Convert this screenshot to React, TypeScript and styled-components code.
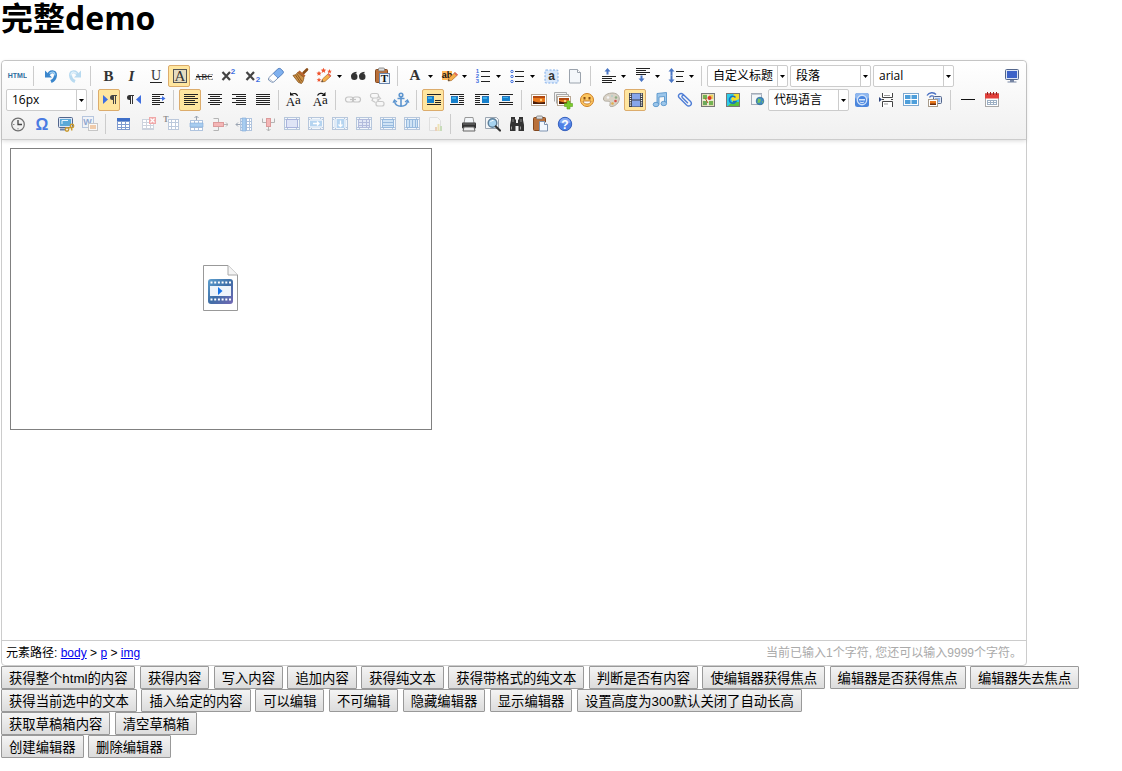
import React from 'react';
import styled, { createGlobalStyle, css } from 'styled-components';

const GlobalStyle = createGlobalStyle`
  body {
    margin: 0;
    padding: 0 1px;
    background: #fff;
    color: #000;
    font-family: 'Liberation Sans', 'Noto Sans CJK SC', sans-serif;
    font-size: 16px;
  }
`;

const Title = styled.h1`
  margin: 0 0 24px;
  font: bold 32px/36px 'Open Sans', 'Noto Sans CJK SC', sans-serif;
`;

const Editor = styled.section`
  box-sizing: border-box;
  max-width: 1026px;
  border: 1px solid #ccc;
  border-radius: 4px;
  background: #fff;
`;

const Toolbar = styled.div`
  display: flex;
  flex-direction: column;
  padding: 3px 2px 3px 3px;
  border-bottom: 1px solid #ccc;
  border-radius: 4px 4px 0 0;
  background: linear-gradient(#fff, #f0f0f0);
  box-shadow: 0 1px 4px rgba(0, 0, 0, 0.15);
`;

const ToolRow = styled.div`
  display: flex;
  flex-wrap: wrap;
`;

const ToolButton = styled.button<{ $active?: boolean; $pushRight?: boolean }>`
  display: flex;
  margin: 1px;
  padding: 0;
  border: 1px solid transparent;
  border-radius: 2px;
  background: transparent;
  ${p => p.$active && css`
    border-color: #dcac6c;
    background: #ffe69f;
  `}
  ${p => p.$pushRight && css`margin-left: auto;`}
`;

const IconSvg = styled.svg<{ $w?: number }>`
  display: block;
  width: ${p => p.$w ?? 20}px;
  height: 20px;
`;

const Separator = styled.span`
  width: 1px;
  height: 20px;
  margin: 2px 4px;
  background: #ccc;
`;

const Combo = styled.label`
  display: grid;
  grid-template-columns: 70px 9px;
  box-sizing: border-box;
  height: 22px;
  margin: 1px;
  border: 1px solid #ccc;
  border-radius: 2px;
  background: #fff;
`;

const ComboSelect = styled.select`
  grid-area: 1 / 1 / 2 / 3;
  appearance: none;
  min-width: 0;
  padding: 0 10px 0 5px;
  border: 0;
  background: transparent;
  color: #000;
  font: 12px/20px 'Open Sans', 'Noto Sans CJK SC', sans-serif;
`;

const ComboArrow = styled.svg`
  grid-area: 1 / 2;
  width: 9px;
  height: 20px;
  box-shadow: -1px 0 #ccc;
  pointer-events: none;
`;

const Content = styled.div`
  box-sizing: border-box;
  min-height: 500px;
  padding: 8px;
`;

const VideoHolder = styled.div`
  display: flex;
  align-items: center;
  justify-content: center;
  max-width: 420px;
  height: 280px;
  border: 1px solid #808080;
`;

const StatusBar = styled.footer`
  display: flex;
  justify-content: space-between;
  padding: 0 4px;
  border-top: 1px solid #ccc;
  font-size: 12px;
  line-height: 24px;
`;

const PathLink = styled.a`
  color: #00e;
  text-decoration: underline;
`;

const WordCount = styled.span`
  color: #aaa;
`;

const ActionRow = styled.div`
  line-height: 23px;
`;

const ActionButton = styled.button`
  box-sizing: border-box;
  height: 23px;
  padding: 0 7px;
  border: 1px solid #999;
  border-radius: 1px;
  background: linear-gradient(#f4f4f4, #dcdcdc);
  color: #000;
  font-family: 'Liberation Sans', 'Noto Sans CJK SC', sans-serif;
  vertical-align: top;
`;

const SANS = 'Liberation Sans, sans-serif';
const SERIF = 'Liberation Serif, serif';
const BLUE = '#3f6fe0';

const txt = (s: string, x: number, y: number, size: number, fill = '#333', family = SERIF, weight = 'bold', style = 'normal') => (
  <text x={x} y={y} fontSize={size} fill={fill} fontFamily={family} fontWeight={weight} fontStyle={style} textAnchor="middle">{s}</text>
);

/* horizontal one-pixel rules, each given as [x, y, width] */
const rules = (list: number[][], fill = '#222') => (
  <g fill={fill} shapeRendering="crispEdges">
    {list.map(([x, y, w], i) => <rect key={i} x={x} y={y} width={w} height={1} />)}
  </g>
);

const alignLines = (offset: (w: number) => number, short: number) =>
  rules([4, 6, 8, 10, 12, 14].map((y, i) => {
    const w = i % 2 ? short : 14;
    return [offset(w), y, w];
  }));

const pencil = (x: number, y: number) => (
  <g transform={`translate(${x} ${y})`}>
    <path d="M0 9 1 6 7 0.5 9.5 3 3.5 8.5z" fill="#f6b04a" stroke="#a86a2a" strokeWidth=".7" />
    <path d="M6 1.5 7.3.3 9.8 2.8 8.5 4z" fill="#e46a5a" />
    <path d="M0 9 .6 7 2 8.4z" fill="#444" />
  </g>
);

const star = (x: number, y: number, r: number) => (
  <path transform={`translate(${x} ${y}) scale(${r})`} fill="#f0532d" d="M0-1 .3-.35 1-.3 .45.15 .62.85 0 .45-.62.85-.45.15-1-.3-.3-.35z" />
);

const bluePic = (x: number, y: number, w: number, h: number) => (
  <g shapeRendering="crispEdges">
    <rect x={x} y={y} width={w} height={h} fill="#1680cc" />
    <rect x={x} y={y} width={w} height={1} fill="#2a6fb0" />
    <rect x={x + 1} y={y + 1} width={w - 3} height={Math.floor(h / 2) - 1} fill="#3cb2ee" />
  </g>
);

const sunset = (x: number, y: number, w: number, h: number) => (
  <g>
    <rect x={x + 0.5} y={y + 0.5} width={w - 1} height={h - 1} fill="#fff" stroke="#b9a894" />
    <rect x={x + 2} y={y + 2} width={w - 4} height={h - 4} fill="#e8781c" />
    <rect x={x + 2} y={y + 2} width={w - 4} height={2} fill="#b3480e" />
    <circle cx={x + w - 6} cy={y + h / 2} r="1.2" fill="#ffd27a" />
    <path d={`M${x + 2} ${y + h - 5}l3 1 3 0.5 ${w - 10} -0.5v2H${x + 2}z`} fill="#4a1c08" />
  </g>
);

const cells = (x: number, y: number, w: number, h: number, xs: number[], ys: number[], stroke = '#a9bfdc', fill = '#fff') => (
  <g shapeRendering="crispEdges" stroke={stroke} fill="none">
    <rect x={x + 0.5} y={y + 0.5} width={w - 1} height={h - 1} fill={fill} />
    {xs.map(v => <path key={`x${v}`} d={`M${v + 0.5} ${y}v${h}`} />)}
    {ys.map(v => <path key={`y${v}`} d={`M${x} ${v + 0.5}h${w}`} />)}
  </g>
);

/* faded outer table whose middle block shows the merge or split */
const mergeFrame = (inner: React.ReactNode) => (
  <g>
    {cells(4, 3, 16, 13, [7, 16], [5, 13], '#b7c7dc', '#f3f7fb')}
    <rect x="6" y="5" width="12" height="9" fill="#dfeaf6" />
    {inner}
  </g>
);

const clipboard = (
  <g>
    <rect x="4.500" y="3.500" width="12" height="13" rx="1" fill="#b9703a" stroke="#83481e" />
    <rect x="7.500" y="2" width="6" height="3" rx="1" fill="#ddd" stroke="#777" strokeWidth=".8" />
  </g>
);

const undoShape = (fill: string, light: string) => (
  <g>
    <path d="M8.500 9C9.500 4.500 15.800 4.500 15.500 9.300C15.300 12 14 14.200 11 15.500" fill="none" stroke={fill} strokeWidth="3" />
    <path d="M5 4.500V11.500H12z" fill={fill} />
    <path d="M9.500 7.500C11.500 5.200 15 5.500 15 9.500" fill="none" stroke={light} strokeWidth="1.200" />
  </g>
);

const arrowUp = (x: number, y: number, h: number) => (
  <path d={`M${x} ${y}l-3 3.500h2v${h - 3}h2v-${h - 3}h2z`} fill="#4a76c4" />
);
const arrowDown = (x: number, y: number, h: number) => (
  <path d={`M${x} ${y + h}l-3-3.500h2v-${h - 3}h2v${h - 3}h2z`} fill="#4a76c4" />
);

const monitor = (x: number, y: number, w: number, h: number, fill: string) => (
  <g>
    <rect x={x + 0.5} y={y + 0.5} width={w - 1} height={h - 1} rx="1" fill="#dde6f5" stroke="#53668c" />
    <rect x={x + 2} y={y + 2} width={w - 4} height={h - 4} fill={fill} />
  </g>
);

const ICONS: Record<string, React.ReactNode> = {
  source: txt('HTML', 10.5, 12, 7, '#2f6f9f', SANS),
  undo: undoShape('#3a86cc', '#a5d4f5'),
  redo: <g transform="matrix(-1 0 0 1 22 0)">{undoShape('#b8daf0', '#e2f2fc')}</g>,
  bold: txt('B', 11.5, 15, 15),
  italic: txt('I', 10.5, 15, 15, '#333', SERIF, 'bold', 'italic'),
  underline: <g>{txt('U', 11, 14, 14, '#333', SERIF, 'normal')}{rules([[5, 16, 12]])}</g>,
  fontborder: <g><rect x="4.500" y="3.500" width="13" height="13" fill="#e6dcc0" stroke="#555" />{txt('A', 11, 15, 15, '#333', SERIF, 'normal')}</g>,
  strike: <g>{txt('ABC', 11, 14, 9, '#222', SERIF, 'normal')}{rules([[3, 10, 16]])}</g>,
  sup: <g><path d="M5.500 6 13 14M13 6 5.500 14" stroke="#444" strokeWidth="2.200" />{txt('2', 16, 8, 8, BLUE, SANS)}</g>,
  sub: <g><path d="M5.500 6 13 14M13 6 5.500 14" stroke="#444" strokeWidth="2.200" />{txt('2', 17, 16, 8, BLUE, SANS)}</g>,
  eraser: (
    <g>
      <path d="M3.500 12 13 2.800Q14.200 2 15.500 2.800L18 5.200Q18.800 6.500 17.800 7.500L9 15.800Q7.800 16.800 6.600 16L3.500 14z" fill="#fff" stroke="#7d95b8" />
      <path d="M8.300 7.500 13 2.800Q14.200 2 15.500 2.800L18 5.200Q18.800 6.500 17.800 7.500L13 12z" fill="#7fb0ee" stroke="#5683c4" strokeWidth=".8" />
      <path d="M3.500 12.200 8 15.900" stroke="#b6bfcc" />
    </g>
  ),
  broom: (
    <g>
      <path d="M18 3.500 14.500 7" stroke="#8a4d17" strokeWidth="2.600" strokeLinecap="round" />
      <path d="M10.500 4.500 16.500 9.500 15 11.500 8.500 6.500z" fill="#b8642c" />
      <path d="M8.500 6.500 15 11.500C14.500 14 14 16 12.500 17.500L9.500 16.500 4 9.500C6 9 7.500 8.500 8.500 6.500z" fill="#cf9347" stroke="#83501b" strokeWidth=".8" />
      <path d="M6.500 9 11.500 16.500M8.200 8.200 13 15.500" stroke="#7b4a18" strokeWidth=".8" />
    </g>
  ),
  wand: <g>{star(10.5, 4.5, 2.8)}{star(6, 7.500, 2.600)}{star(16.500, 5.500, 2.400)}{star(6, 14, 2.400)}{pencil(8.500, 7)}</g>,
  quote: (
    <g fill="#333">
      <circle cx="7.300" cy="10.800" r="3.200" /><path d="M4.100 11C4 8 6 6 9.500 5.800V7.500C7.500 7.800 6.800 8.800 6.800 10z" />
      <circle cx="15.300" cy="10.800" r="3.200" /><path d="M12.100 11C12 8 14 6 17.500 5.800V7.500C15.500 7.800 14.800 8.800 14.800 10z" />
    </g>
  ),
  pasteplain: <g>{clipboard}<rect x="8.500" y="7.500" width="10" height="10" fill="#eef4fb" stroke="#6a86ad" />{txt('T', 13.5, 16, 11, '#111')}</g>,
  forecolor: txt('A', 11, 14, 15, '#333', SERIF, 'bold'),
  backcolor: <g><rect x="4" y="5" width="10" height="9" fill="#ffb857" />{txt('ab', 9, 12, 9, '#111', SANS)}<g transform="translate(2 1)">{pencil(8, 5)}</g></g>,
  ol: <g>{txt('1', 5.5, 7, 6, BLUE, SANS)}{txt('2', 5.5, 12, 6, BLUE, SANS)}{txt('3', 5.5, 17, 6, BLUE, SANS)}{rules([[9, 5, 9], [9, 10, 9], [9, 15, 9]])}</g>,
  ul: <g><g fill="none" stroke={BLUE}><circle cx="6" cy="5.500" r="1.200" /><circle cx="6" cy="10.500" r="1.200" /><circle cx="6" cy="15.500" r="1.200" /></g>{rules([[9, 5, 9], [9, 10, 9], [9, 15, 9]])}</g>,
  selectall: <g><rect x="5" y="4" width="13" height="13" rx="1" fill="#d9e8fb" stroke="#7fadea" strokeDasharray="2 1.500" />{txt('a', 11.5, 14, 12, '#333', SANS)}</g>,
  cleardoc: <g><path d="M5.500 3.500h8l3 3v10.500h-11z" fill="#f4f7fa" stroke="#9ba3ad" /><path d="M13.500 3.500v3h3" fill="#fff" stroke="#9ba3ad" /></g>,
  rowtop: <g>{arrowUp(10.5, 2, 6)}{rules([[5, 10, 14], [5, 12, 10], [5, 14, 14], [5, 16, 10]])}</g>,
  rowbottom: <g>{rules([[5, 2, 14], [5, 4, 10], [5, 6, 14], [5, 8, 10]])}{arrowDown(10.5, 10, 6)}</g>,
  lineheight: <g>{arrowUp(6.5, 2, 7)}{arrowDown(6.5, 10, 7)}{rules([[11, 5, 8], [11, 10, 7], [11, 15, 8]])}</g>,
  fullscreen: <g>{monitor(3, 3, 14, 11, '#3c62c8')}<path d="M8 14h4v1.500H8zM5.500 15.500h9v1h-9z" fill="#7786a3" /></g>,
  ltr: <g><path d="M4 5v9l5-4.500z" fill={BLUE} /><path d="M18 5.500H13.500M14.500 5v9M16.500 5v9" fill="none" stroke="#444" /><path d="M14.500 5H13.500a2.500 2.500 0 0 0 0 5h1z" fill="#444" /></g>,
  rtl: <g><path d="M18 5v9l-5-4.500z" fill={BLUE} /><path d="M11 5.500H7M7.500 5v9M9.500 5v9" fill="none" stroke="#333" /><path d="M7.500 5H6.500a2.500 2.500 0 0 0 0 5h1z" fill="#333" /></g>,
  indent: <g>{rules([[5, 4, 12], [5, 6, 8], [5, 8, 8], [5, 10, 8], [5, 12, 12], [5, 14, 8]])}<path d="M13 8h2V6l3.500 2.500L15 11V9h-2z" fill={BLUE} /></g>,
  left: alignLines(() => 4, 11),
  center: alignLines(w => 4 + Math.floor((14 - w) / 2), 10),
  right: alignLines(w => 18 - w, 10),
  justify: alignLines(() => 4, 14),
  upper: <g>{txt('A', 5.5, 16, 13, '#111', SERIF, 'normal')}{txt('a', 13, 14, 13, '#111', SERIF, 'normal')}<path d="M12.500 6C12 3.500 9 3 7 4" fill="none" stroke="#111" strokeWidth="1.200" /><path d="M5 5.500V2l4 3.500z" fill="#111" /></g>,
  lower: <g>{txt('A', 8.5, 16, 13, '#111', SERIF, 'normal')}{txt('a', 16, 14, 13, '#111', SERIF, 'normal')}<path d="M8.500 5.500C10 3 13 3 14.500 4" fill="none" stroke="#111" strokeWidth="1.200" /><path d="M16.500 6V2l-4 4z" fill="#111" /></g>,
  link: <g fill="none" stroke="#c4c4c4" strokeWidth="1.200"><rect x="3.500" y="7" width="8" height="5" rx="2.500" /><rect x="10.500" y="7" width="8" height="5" rx="2.500" /><path d="M8 9.500h6" /></g>,
  unlink: <g fill="none" stroke="#c8c8c8" strokeWidth="1.200"><rect x="4.500" y="3.500" width="8" height="4.500" rx="2" /><rect x="10" y="11.500" width="8" height="4.500" rx="2" /><path d="M12.500 6l2 2.500-3 1.500 1.500 1.500M7 8l-1 2.500 3.500 2" /></g>,
  anchor: <g fill="none" stroke="#5d95cf" strokeWidth="1.600"><circle cx="11" cy="5" r="1.800" /><path d="M11 7v9M7.500 8.500h7M4.500 11C5 14.500 8 16.200 11 16.200s6-1.700 6.500-5.200" /><path d="M3 12.800 4.500 10l2.500 2M19 12.800 17.500 10l-2.500 2" strokeWidth="1.200" /></g>,
  imgnone: <g>{rules([[4, 4, 14], [12, 10, 6], [12, 12, 6], [4, 14, 14]])}{bluePic(4, 6, 7, 7)}</g>,
  imgleft: <g>{rules([[3, 4, 14], [12, 6, 5], [12, 8, 5], [12, 10, 5], [12, 12, 5], [3, 14, 14]])}{bluePic(4, 6, 7, 7)}</g>,
  imgright: <g>{rules([[4, 4, 14], [4, 6, 5], [4, 8, 5], [4, 10, 5], [4, 12, 5], [4, 14, 14]])}{bluePic(11, 6, 7, 7)}</g>,
  imgcenter: <g>{rules([[4, 4, 14], [4, 12, 14], [4, 14, 14]])}{bluePic(7, 6, 8, 5)}</g>,
  simpleimage: sunset(3, 4, 16, 12),
  images: (
    <g>
      <path d="M2.500 11.500v-9h12v2M4.500 13.500v-9h12v2" fill="#f4f4f4" stroke="#a9a9a9" />
      {sunset(5, 6, 14, 10)}
      <path d="M15 11h3v2.500h2.500v3H18V19h-3v-2.500h-2.500v-3H15z" fill="#7bcb2c" stroke="#5aa51c" strokeWidth=".6" />
    </g>
  ),
  emotion: (
    <g>
      <circle cx="10" cy="10" r="6.500" fill="#fcc660" stroke="#cf7f24" />
      <rect x="6.500" y="7" width="2" height="2.500" fill="#8a4f12" /><rect x="11.500" y="7" width="2" height="2.500" fill="#8a4f12" />
      <path d="M6 11h8C13.500 15 6.500 15 6 11z" fill="#fff" stroke="#b5691c" strokeWidth=".8" />
    </g>
  ),
  scrawl: (
    <g>
      <path d="M2.500 9C2.500 5 7 3 12 3C17 3.500 19 6.500 18 10.500C17 14 13 17 9.500 16.500C7.500 16 10.500 12.500 8.500 11.500C6.500 10.800 2.500 12 2.500 9z" fill="#d9d2c6" stroke="#b0aa9e" />
      <circle cx="7" cy="7.500" r="1.300" fill="#f3f3f3" /><circle cx="11" cy="6" r="1.200" fill="#bdd0c8" /><circle cx="15" cy="7.500" r="1.300" fill="#8fae86" />
      <circle cx="14.500" cy="11" r="1.300" fill="#d9534a" /><circle cx="11.500" cy="13.500" r="1.300" fill="#e1b04c" />
    </g>
  ),
  video: (
    <g>
      <rect x="4" y="3" width="14" height="14" fill="#3b3f4a" />
      <rect x="7" y="3.500" width="8" height="6" fill="#86a6ea" /><rect x="7" y="10.500" width="8" height="6" fill="#86a6ea" />
      <path d="M5.500 3.500v13M16.500 3.500v13" stroke="#f0f0f0" strokeWidth="1.300" strokeDasharray="1.200 1" />
    </g>
  ),
  music: (
    <g fill="#9cc6ea" stroke="#5a96cc" strokeWidth=".9">
      <path d="M8 3.500 17.500 2.500V13h-2V6.500L10 7v7.500H8z" />
      <ellipse cx="7" cy="14.500" rx="2.800" ry="2.200" /><ellipse cx="14.800" cy="13.500" rx="2.800" ry="2.200" />
    </g>
  ),
  attach: (
    <path d="M15.500 9.500 10 4.300C7.500 2 4 5.300 6.300 7.800L13.500 15C16.500 17.800 20 14 17.300 11.300L11.500 5.800C9.800 4.300 8 6.200 9.500 7.800L14.500 12.700" fill="none" stroke="#4f7ed6" strokeWidth="1.400" strokeLinecap="round" />
  ),
  map: (
    <g>
      <rect x="4.500" y="3.500" width="13" height="13" fill="#e0dcb4" stroke="#777" />
      <path d="M6 5h4v4H6zM12 11h4v4h-4z" fill="#74b352" /><path d="M12 5h4v4h-4z" fill="#f0cf5a" /><path d="M6 11h4v4H6z" fill="#6fa85c" />
      <path d="M5 10h12M11 4v12" stroke="#fff" strokeWidth=".8" /><circle cx="12.500" cy="8" r="2" fill="#d8372a" /><path d="M8 8l3 5" stroke="#b05a24" />
    </g>
  ),
  gmap: (
    <g>
      <rect x="5.500" y="3.500" width="13" height="13" fill="#2ecbe8" stroke="#777" />
      <path d="M13 4h5v5l-6 3-2-3z" fill="#f2df2b" /><path d="M7 16l4-4h7v4z" fill="#58c33a" />
      <path d="M14.500 7.500a3.500 3.500 0 1 0 .5 4h-3" fill="none" stroke="#1573c4" strokeWidth="1.500" />
    </g>
  ),
  frame: (
    <g>
      <rect x="6.500" y="3.500" width="10" height="11" fill="#f3f6f9" stroke="#a4acb8" /><path d="M6.500 4.500h10" stroke="#c2cbd6" />
      <circle cx="15" cy="11" r="3.800" fill="#3f8cc4" stroke="#2c6791" strokeWidth=".7" /><path d="M13 8.500l3 1-1 3-2.500.5zM17 11l1.200.5-1.200 2z" fill="#7cc65c" />
    </g>
  ),
  webapp: (
    <g>
      <rect x="3" y="3" width="14" height="14" rx="2.500" fill="#4c86dc" /><rect x="3" y="3" width="14" height="6" rx="2.500" fill="#8fb7ee" />
      <circle cx="10" cy="10" r="4.700" fill="#4a86e0" stroke="#cfe2fa" strokeWidth="1.400" />
      <path d="M7 9h6v1.500H7z" fill="#d9e8fb" /><path d="M7.800 12q2.200 1.500 4.400 0" fill="none" stroke="#d9e8fb" />
    </g>
  ),
  pagebreak: (
    <g fill="#fff" stroke="#444">
      <path d="M6.500 3v4.500h10V3M6.500 17v-5.500h10V17" /><path d="M8 5.500h6M8 14h4" stroke="#999" /><path d="M6 9.500h2M15 9.500h2" />
      <path d="M3 7v5l3-2.500z" fill="#31477f" stroke="none" />
    </g>
  ),
  template: (
    <g>
      <rect x="3.500" y="3.500" width="15" height="12" fill="#fff" stroke="#7fa9d0" />
      <path d="M5 5h5.500v4H5zM11.500 5H17v4h-5.500zM5 10h5.500v4H5zM11.500 10H17v4h-5.500z" fill="#4e9fdb" />
    </g>
  ),
  background: (
    <g>
      {monitor(9, 6, 9, 8, '#8fb4ec')}
      <path d="M3 5.500C5 2 10 2 12 4.500M5.500 7.500c1-2 3-2 4.500-1" fill="none" stroke="#4a70c2" strokeWidth="1.300" />
      <rect x="4.500" y="9.500" width="9" height="7" fill="#fff" stroke="#a89c8c" /><rect x="6" y="11" width="6" height="4" fill="#e8781c" /><path d="M6 13.500h6V15H6z" fill="#6b2b0a" />
    </g>
  ),
  hr: rules([[4, 9, 14]], '#111'),
  date: (
    <g>
      <rect x="4.500" y="3.500" width="13" height="13" fill="#fff" stroke="#a9a9a9" /><path d="M4 3.500h14v5H4z" fill="#e2403b" />
      <path d="M6.500 2v3M9.500 2v3M12.500 2v3M15.500 2v3" stroke="#a01f1c" />
      {cells(6, 10, 10, 5, [9, 12], [12], '#9db0c4')}
    </g>
  ),
  time: <g><circle cx="11" cy="10.500" r="6.300" fill="#f2f2f2" stroke="#707070" strokeWidth="1.200" /><path d="M11 6v4.500h4" fill="none" stroke="#444" strokeWidth="1.300" /><path d="M6 10.500h1.500M11 14v1.500" stroke="#888" /></g>,
  spechars: txt('Ω', 11, 16, 16, '#4a7be2', SANS),
  snapscreen: (
    <g>
      {monitor(3, 3, 15, 11, '#5aa9d8')}
      <path d="M7 10V6.500h6" fill="none" stroke="#e8f5fd" />
      <path d="M5 15.500h6" stroke="#6a83a8" strokeWidth="2" />
      <g fill="none" stroke="#c99a2e" strokeWidth="1.400"><circle cx="12" cy="15.500" r="1.700" /><circle cx="17" cy="12" r="1.700" /><path d="M13.200 14.500 16 13M16 13l1 3.500" /></g>
    </g>
  ),
  wordimage: (
    <g opacity=".6">
      <rect x="3.500" y="2.500" width="11" height="11" fill="#eef3fb" stroke="#8fa9d0" />{txt('W', 8.5, 11, 9, '#4a74b8', SANS)}
      <rect x="9.500" y="9.500" width="9" height="7" fill="#fff" stroke="#aaa" /><rect x="11" y="11" width="6" height="4" fill="#f0b37c" />
    </g>
  ),
  table: <g>{cells(5, 4, 13, 12, [9, 13], [7, 10, 13], '#7f9bd0')}<path d="M5 4h13v3H5z" fill="#3f6fc8" /></g>,
  deltable: <g>{cells(6, 5, 12, 11, [10, 14], [8, 11, 14], '#cdd3dd')}<rect x="13" y="3" width="7" height="7" fill="#f0a8a8" /><path d="M14.500 4.500l4 4M18.500 4.500l-4 4" stroke="#fff" strokeWidth="1.300" /></g>,
  parabefore: <g>{txt('T', 6, 8, 8, '#8d8d8d', SERIF)}{cells(8, 5, 11, 11, [11, 15], [8, 12], '#bcc9dc')}</g>,
  insertrow: <g><path d="M12.500 7V2M10.500 4l2-2 2 2" fill="none" stroke="#9aa4b2" />{cells(6, 6, 13, 11, [10, 14], [9, 13], '#b0c4de')}<path d="M6 9h13v4H6z" fill="#a8cdf0" stroke="#7fa9d6" strokeWidth=".6" /></g>,
  deleterow: <g fill="none" stroke="#b4b4b4"><path d="M5.500 4.500h5v4M5.500 16.500h5v-4" /><rect x="5.500" y="8.500" width="10" height="4" fill="#f4b6b6" stroke="#dc9a9a" /><path d="M16 10.500h4M18 8.500l2 2-2 2" /></g>,
  insertcol: <g><path d="M8 10.500H4M6 8.500l-2 2 2 2" fill="none" stroke="#9aa4b2" />{cells(8, 4, 12, 13, [14, 17], [7, 10, 13], '#b0c4de')}<path d="M10 4h4v13h-4z" fill="#a8cdf0" stroke="#7fa9d6" strokeWidth=".6" /></g>,
  deletecol: <g fill="none" stroke="#b4b4b4"><path d="M6.500 4.500v4h4M18.500 4.500v4h-4" /><rect x="10.500" y="4.500" width="4" height="8" fill="#f4b6b6" stroke="#dc9a9a" /><path d="M12.500 13v4M10.500 15l2 2 2-2" /></g>,
  mergecells: mergeFrame(<rect x="6.500" y="5.500" width="11" height="8" fill="#dfe4f6" stroke="#aab4dc" />),
  mergeright: mergeFrame(<g><rect x="6" y="7" width="12" height="5" fill="#b5d4f0" /><path d="M9 9.500h6M13 7.500l2 2-2 2" fill="none" stroke="#fff" strokeWidth="1.300" /></g>),
  mergedown: mergeFrame(<g><rect x="9" y="5" width="7" height="9" fill="#b5d4f0" /><path d="M12.500 6.500v6M10.500 10.500l2 2 2-2" fill="none" stroke="#fff" strokeWidth="1.300" /></g>),
  splitcells: mergeFrame(cells(6, 5, 12, 9, [10, 14], [8, 11], '#b2bbdc', '#e2e7f5')),
  splitrows: mergeFrame(cells(6, 5, 12, 9, [], [8, 11], '#98bade', '#cfe3f5')),
  splitcols: mergeFrame(cells(6, 5, 12, 9, [9, 12, 15], [], '#98bade', '#cfe3f5')),
  charts: <g opacity=".35"><path d="M5.500 3.500h8l3 3v10h-11z" fill="#fff" stroke="#bbb" /><path d="M11 13h2v4h-2z" fill="#e09050" /><path d="M13.500 10h2v7h-2z" fill="#e8c84a" /><path d="M16 12h2v5h-2z" fill="#7db653" /></g>,
  print: (
    <g>
      <path d="M8 3.500h8l1 6H7z" fill="#f3f6f9" stroke="#999" />
      <rect x="5" y="8.500" width="14" height="6" rx="1" fill="#333" /><path d="M6 10h12" stroke="#777" />
      <path d="M7 13h10l1 4H6z" fill="#ededed" stroke="#666" />
    </g>
  ),
  preview: (
    <g>
      <path d="M4.500 3.500h11l2 2v9h-13z" fill="#f4f6f8" stroke="#9aa5b1" />
      <circle cx="11.500" cy="9" r="4.300" fill="#a7d3f0" stroke="#5e7f99" strokeWidth="1.400" /><path d="M9.500 8q1-2 3-1.500" fill="none" stroke="#fff" />
      <path d="M14.800 12.500 19 16.500" stroke="#333" strokeWidth="2.200" strokeLinecap="round" />
    </g>
  ),
  search: (
    <g fill="#333">
      <path d="M6 3h4v2l1 1v3h2V6l1-1V3h4v3l1 5v6h-5.500v-5h-3v5H5v-6l1-5z" />
      <path d="M6.500 12.500v3M15.500 12.500v3" stroke="#999" /><path d="M8 5v3M16 5v3" stroke="#888" />
    </g>
  ),
  paste: <g>{clipboard}<path d="M10.500 7.500h5l3 3v6.500h-8z" fill="#f2f7fd" stroke="#7f93b0" /><path d="M15.500 7.500v3h3" fill="#fff" stroke="#7f93b0" /></g>,
  help: <g><circle cx="12" cy="10" r="6.700" fill="#4f80e6" stroke="#3560bd" /><path d="M6.500 8.500a5.600 5.600 0 0 1 11 0q-5.500 2.500-11 0z" fill="#86a9f3" />{txt('?', 12, 14.5, 12, '#fff', SANS)}</g>,
};

type Item =
  | { kind: 'btn'; icon: string; label: string; active?: boolean; menu?: boolean; right?: boolean; w?: number }
  | { kind: 'sep' }
  | { kind: 'combo'; label: string; value: string };

const b = (icon: string, label: string, extra: Partial<Extract<Item, { kind: 'btn' }>> = {}): Item => ({ kind: 'btn', icon, label, ...extra });
const sep: Item = { kind: 'sep' };
const combo = (label: string, value: string): Item => ({ kind: 'combo', label, value });

const ROWS: Item[][] = [
  [
    b('source', '源代码'), sep,
    b('undo', '撤销'), b('redo', '重做'), sep,
    b('bold', '加粗'), b('italic', '斜体'), b('underline', '下划线'), b('fontborder', '字符边框', { active: true }),
    b('strike', '删除线'), b('sup', '上标'), b('sub', '下标'), b('eraser', '清除格式'), b('broom', '格式刷'),
    b('wand', '自动排版', { menu: true }), b('quote', '引用'), b('pasteplain', '纯文本粘贴模式'), sep,
    b('forecolor', '字体颜色', { menu: true }), b('backcolor', '背景色', { menu: true }),
    b('ol', '有序列表', { menu: true }), b('ul', '无序列表', { menu: true }), b('selectall', '全选'), b('cleardoc', '清空文档'), sep,
    b('rowtop', '段前距', { menu: true }), b('rowbottom', '段后距', { menu: true }), b('lineheight', '行间距', { menu: true }), sep,
    combo('标题样式', '自定义标题'), combo('段落格式', '段落'), combo('字体', 'arial'),
    b('fullscreen', '全屏', { right: true }),
  ],
  [
    combo('字号', '16px'), sep,
    b('ltr', '从左向右输入', { active: true }), b('rtl', '从右向左输入'), b('indent', '首行缩进'), sep,
    b('left', '居左对齐', { active: true }), b('center', '居中对齐'), b('right', '居右对齐'), b('justify', '两端对齐'), sep,
    b('upper', '字母大写'), b('lower', '字母小写'), sep,
    b('link', '超链接'), b('unlink', '取消链接'), b('anchor', '锚点'), sep,
    b('imgnone', '默认', { active: true }), b('imgleft', '左浮动'), b('imgright', '右浮动'), b('imgcenter', '居中'), sep,
    b('simpleimage', '单图上传'), b('images', '多图上传', { w: 21 }), b('emotion', '表情'), b('scrawl', '涂鸦'),
    b('video', '视频', { active: true }), b('music', '音乐'), b('attach', '附件'), b('map', '百度地图'), b('gmap', '谷歌地图'), b('frame', '插入框架'),
    combo('代码语言', '代码语言'),
    b('webapp', '百度应用'), b('pagebreak', '分页'), b('template', '模板'), b('background', '背景'), sep,
    b('hr', '分隔线'), b('date', '日期'),
  ],
  [
    b('time', '时间'), b('spechars', '特殊字符'), b('snapscreen', '截图'), b('wordimage', '图片转存'), sep,
    b('table', '插入表格'), b('deltable', '删除表格'), b('parabefore', '表格前插入行'), b('insertrow', '前插入行'), b('deleterow', '删除行'),
    b('insertcol', '前插入列'), b('deletecol', '删除列'), b('mergecells', '合并多个单元格'), b('mergeright', '右合并单元格'), b('mergedown', '下合并单元格'),
    b('splitcells', '完全拆分单元格'), b('splitrows', '拆分成行'), b('splitcols', '拆分成列'), b('charts', '图表'), sep,
    b('print', '打印'), b('preview', '预览'), b('search', '查询替换'), b('paste', '粘贴'), b('help', '帮助'),
  ],
];

const ACTIONS = [
  ['获得整个html的内容', '获得内容', '写入内容', '追加内容', '获得纯文本', '获得带格式的纯文本', '判断是否有内容', '使编辑器获得焦点', '编辑器是否获得焦点', '编辑器失去焦点'],
  ['获得当前选中的文本', '插入给定的内容', '可以编辑', '不可编辑', '隐藏编辑器', '显示编辑器', '设置高度为300默认关闭了自动长高'],
  ['获取草稿箱内容', '清空草稿箱'],
  ['创建编辑器', '删除编辑器'],
];

function Tool({ item }: { item: Item }) {
  if (item.kind === 'sep') return <Separator />;
  if (item.kind === 'combo') {
    return (
      <Combo>
        <ComboSelect aria-label={item.label} defaultValue={item.value}>
          <option>{item.value}</option>
        </ComboSelect>
        <ComboArrow viewBox="0 0 9 20" aria-hidden="true"><path d="M2 9h5L4.500 12z" /></ComboArrow>
      </Combo>
    );
  }
  const w = item.w ?? 20;
  return (
    <ToolButton type="button" title={item.label} aria-label={item.label} $active={item.active} $pushRight={item.right}>
      <IconSvg $w={w} viewBox={`0 0 ${w} 20`} aria-hidden="true">{ICONS[item.icon]}</IconSvg>
      {item.menu && <IconSvg $w={10} viewBox="0 0 10 20" aria-hidden="true"><path d="M4 9h5L6.500 12z" /></IconSvg>}
    </ToolButton>
  );
}

function VideoIcon() {
  return (
    <svg width="36" height="48" viewBox="0 0 36 48" role="img" aria-label="video">
      <defs>
        <linearGradient id="film" x1="0" y1="0" x2="1" y2="1">
          <stop offset="0" stopColor="#5fa0cf" />
          <stop offset=".5" stopColor="#3e6ea6" />
          <stop offset="1" stopColor="#7468b4" />
        </linearGradient>
      </defs>
      <path d="M.5.500H25L34.500 10V45.500H.5z" fill="#fff" stroke="#999" />
      <path d="M25 .5V10H34.500" fill="#f4f4f4" stroke="#aaa" />
      <rect x="5" y="14" width="25" height="25" rx="3" fill="url(#film)" />
      <rect x="7" y="21" width="21" height="10" fill="#eef4fa" />
      <path d="M7.500 17.500H28M7.500 34.500H28" stroke="#fff" strokeWidth="2" strokeDasharray="2 1.700" />
      <path d="M15 22v8l4.500-4z" fill="#1673e6" />
    </svg>
  );
}

export default function App() {
  return (
    <>
      <GlobalStyle />
      <Title>完整demo</Title>
      <Editor>
        <Toolbar role="toolbar" aria-label="编辑器工具栏">
          {ROWS.map((row, i) => (
            <ToolRow key={i}>{row.map((item, j) => <Tool key={j} item={item} />)}</ToolRow>
          ))}
        </Toolbar>
        <Content>
          <VideoHolder><VideoIcon /></VideoHolder>
        </Content>
        <StatusBar>
          <span>
            元素路径: <PathLink href="#body">body</PathLink> &gt; <PathLink href="#p">p</PathLink> &gt; <PathLink href="#img">img</PathLink>
          </span>
          <WordCount>当前已输入1个字符, 您还可以输入9999个字符。</WordCount>
        </StatusBar>
      </Editor>
      {ACTIONS.map((row, i) => (
        <ActionRow key={i}>
          {row.map(label => (
            <React.Fragment key={label}><ActionButton type="button">{label}</ActionButton>{' '}</React.Fragment>
          ))}
        </ActionRow>
      ))}
    </>
  );
}
